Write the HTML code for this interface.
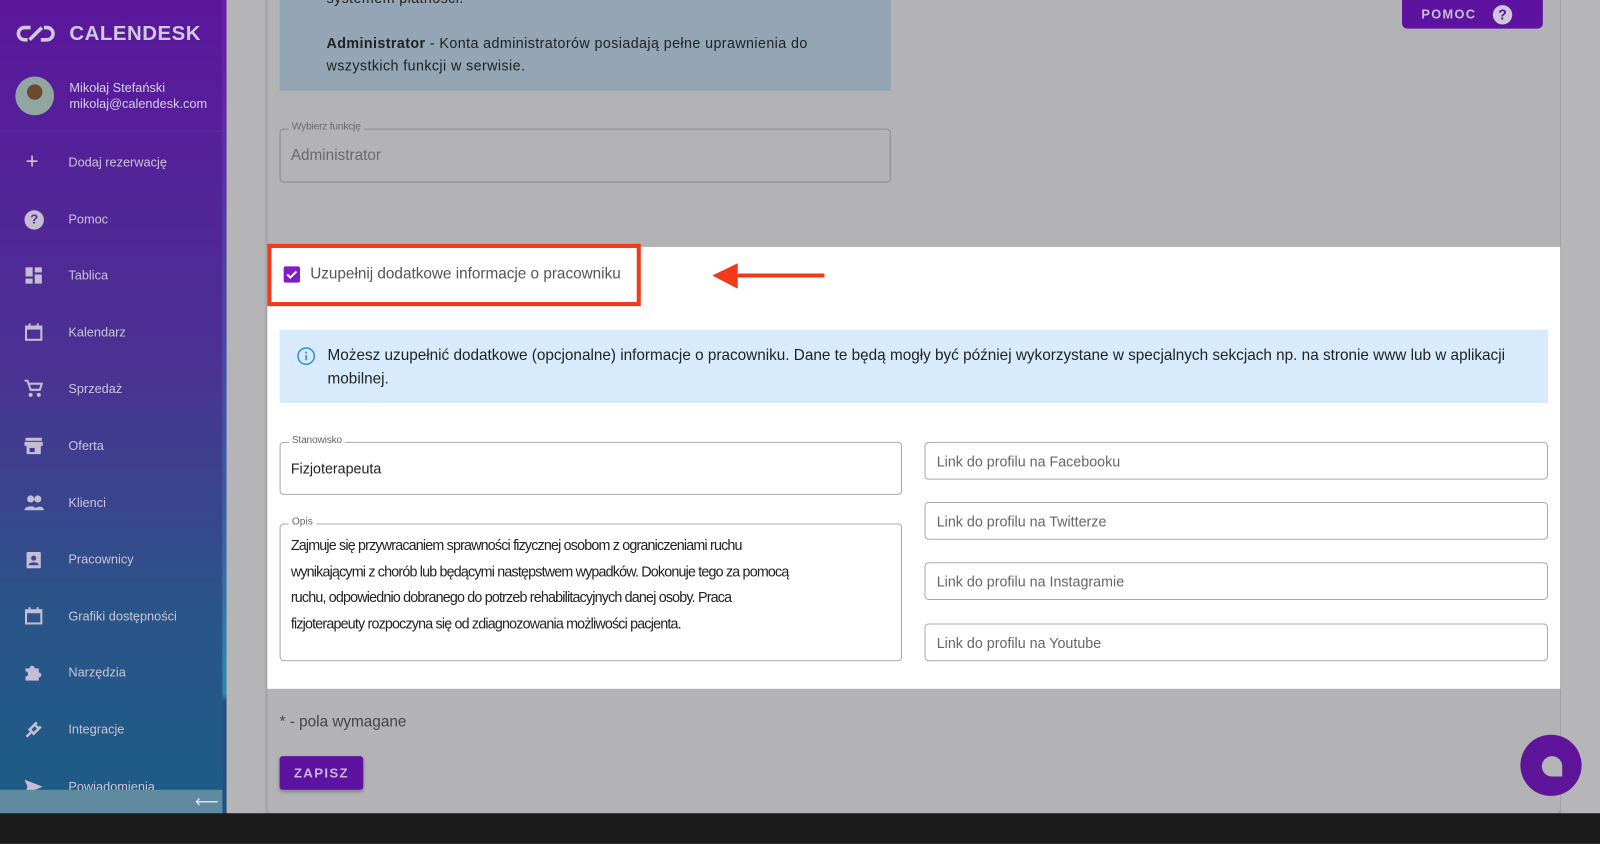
<!DOCTYPE html>
<html><head><meta charset="utf-8"><style>
*{box-sizing:border-box;margin:0;padding:0}
html,body{width:1600px;height:816px;overflow:hidden;background:#b5b4b7}
#w{position:absolute;left:0;top:0;width:1568px;height:800px;transform:scale(1.0204);transform-origin:0 0;font-family:"Liberation Sans",sans-serif;color:#1d1d1d}
.sb{position:absolute;left:0;top:0;width:218px;height:800px;background:linear-gradient(180deg,#5b169c 0%,#4b3293 45%,#2a5589 75%,#1c5c86 100%);color:#c9c3d6}
.sbedge{position:absolute;left:218px;top:0;width:4px;height:800px;background:linear-gradient(180deg,#6a1aa8,#3a5aa8 60%,#2a8aaa 85%,#1e5080 86%)}
.logo{position:absolute;left:16px;top:22px;font-weight:bold;font-size:20px;letter-spacing:.5px;color:#cfcbd6}
.logo span{margin-left:52px}
.av{position:absolute;left:15px;top:75px;width:38px;height:38px;border-radius:50%;background:radial-gradient(circle at 50% 40%,#6b4a30 0 25%,#8fa7a0 26%)}
.nm{position:absolute;left:68px;top:78px;font-size:12.5px;line-height:16px;color:#d6d0e0}
.sep{position:absolute;left:0;top:128px;width:218px;height:1px;background:rgba(255,255,255,.08)}
.it{position:absolute;left:0;width:218px;height:20px;font-size:12.5px;color:#cbc4d8}
.it i{position:absolute;left:24px;top:0;width:18px;height:18px;display:block}
.it b{position:absolute;left:67px;top:2px;font-weight:normal}
.foot{position:absolute;left:0;top:774px;width:222px;height:26px;background:#5f8aa0}
.foot span{position:absolute;right:8px;top:2px;color:#d8e2e8;font-size:16px}
.bot{position:absolute;left:0;top:797px;width:1600px;height:30px;background:#1a1a1a}
.card{position:absolute;left:262px;top:-10px;width:1267px;height:808px;background:#b3b2b5;border-radius:0 0 6px 6px;box-shadow:0 1px 3px rgba(0,0,0,.25)}
.rside{position:absolute;left:1530px;top:0;width:70px;height:800px;background:#b6b5b8}
.info1{position:absolute;left:274px;top:0;width:599px;height:89px;background:#94a5b5;font-size:14px;line-height:22px;color:#222;padding-left:46px;letter-spacing:.4px}
.fld{position:absolute;border:1px solid #8c8b8e;border-radius:4px}
.lbl{position:absolute;top:-8px;left:8px;font-size:10px;padding:0 3px;color:#6b6a6d;letter-spacing:-.2px}
.hl{position:absolute;left:262px;top:242px;width:1267px;height:433px;background:#fff}
.box{position:absolute;left:262px;top:239px;width:366px;height:61px;border:4px solid #f2391a}
.cb{position:absolute;left:278px;top:261px;width:16px;height:16px;background:#8419c9;border-radius:2px}
.t14{font-size:14px}
.info2{position:absolute;left:274px;top:323px;width:1243px;height:72px;background:#d7ebfc;color:#222;font-size:15px;line-height:23px;padding:14px 0 0 47px}
.wf{position:absolute;border:1px solid #a9a9a9;border-radius:4px;background:#fff}
.wf .lbl{background:#fff;color:#666}
.ph{position:absolute;left:11px;top:10px;color:#666}
.btn{position:absolute;left:274px;top:741px;width:82px;height:33px;background:#5e13a0;border-radius:3px;color:#c6b8d8;font-weight:bold;font-size:13px;letter-spacing:1.3px;text-align:center;line-height:33px;box-shadow:0 2px 3px rgba(0,0,0,.25)}
.pomoc{position:absolute;left:1374px;top:0;width:138px;height:28px;background:#5d139f;border-radius:0 0 5px 5px;color:#c9bfd8;font-weight:bold;font-size:12.5px;letter-spacing:1.3px;line-height:28px;padding-left:19px}
.pomoc i{position:absolute;left:89px;top:5px;width:19px;height:19px;border-radius:50%;background:#cfc8dc;color:#5d139f;font-style:normal;text-align:center;line-height:19px;font-size:14px;letter-spacing:0}
.fab{position:absolute;left:1490px;top:720px;width:60px;height:60px;border-radius:50%;background:#5e1599}
</style></head><body><div id="w">
<div class="card"></div>
<div class="rside"></div>
<div class="sb">
 <div class="logo"><svg style="position:absolute;left:0;top:2px" width="38" height="18" viewBox="0 0 38 18"><path d="M14 3H8a6 6 0 0 0 0 12h3M24 15h6a6 6 0 0 0 0-12h-3M13 15L25 3" fill="none" stroke="#cfcbd6" stroke-width="3.5"/></svg><span>CALENDESK</span></div>
 <div class="av"></div>
 <div class="nm">Mikołaj Stefański<br>mikolaj@calendesk.com</div>
 <div class="sep"></div>
 <div class="it" style="top:150px"><i style="font-style:normal;font-size:22px;top:-5px;left:25px">+</i><b>Dodaj rezerwację</b></div>
 <div class="it" style="top:206px"><i style="border-radius:50%;background:#c4bdd4;color:#52308f;font-style:normal;text-align:center;font-weight:bold;font-size:13px;line-height:18px;width:19px;height:19px">?</i><b>Pomoc</b></div>
 <div class="it" style="top:261px"><i><svg width="18" height="18"><rect x="1" y="1" width="7" height="9" fill="#c4bdd4"/><rect x="10" y="1" width="7" height="5" fill="#c4bdd4"/><rect x="1" y="12" width="7" height="5" fill="#c4bdd4"/><rect x="10" y="8" width="7" height="9" fill="#c4bdd4"/></svg></i><b>Tablica</b></div>
 <div class="it" style="top:317px"><i><svg width="18" height="18"><rect x="1.5" y="3" width="15" height="13" fill="none" stroke="#c4bdd4" stroke-width="2"/><rect x="1.5" y="3" width="15" height="3" fill="#c4bdd4"/><rect x="4" y="0" width="2" height="4" fill="#c4bdd4"/><rect x="12" y="0" width="2" height="4" fill="#c4bdd4"/></svg></i><b>Kalendarz</b></div>
 <div class="it" style="top:372px"><i><svg width="18" height="18"><path d="M0 1h3l3 9h9l2-6H5" fill="none" stroke="#c4bdd4" stroke-width="2"/><circle cx="6" cy="15" r="2" fill="#c4bdd4"/><circle cx="14" cy="15" r="2" fill="#c4bdd4"/></svg></i><b>Sprzedaż</b></div>
 <div class="it" style="top:428px"><i><svg width="18" height="18"><rect x="1" y="1" width="16" height="3" fill="#c4bdd4"/><path d="M0 5h18v4H0z M2 9h14v8H2z" fill="#c4bdd4"/><rect x="5" y="11" width="5" height="4" fill="#4a3693"/></svg></i><b>Oferta</b></div>
 <div class="it" style="top:484px"><i><svg width="20" height="18"><circle cx="6" cy="5" r="3.5" fill="#c4bdd4"/><circle cx="13" cy="5" r="3.5" fill="#c4bdd4"/><path d="M0 16c0-5 12-5 12 0zM10 16c0-4 9-5 9 0z" fill="#c4bdd4"/></svg></i><b>Klienci</b></div>
 <div class="it" style="top:539px"><i><svg width="18" height="18"><rect x="2" y="2" width="14" height="16" rx="1" fill="#c4bdd4"/><circle cx="9" cy="8" r="2.5" fill="#3f4690"/><path d="M4 15c0-4 10-4 10 0z" fill="#3f4690"/></svg></i><b>Pracownicy</b></div>
 <div class="it" style="top:595px"><i><svg width="18" height="18"><rect x="1.5" y="3" width="15" height="13" fill="none" stroke="#c4bdd4" stroke-width="2"/><rect x="1.5" y="3" width="15" height="3" fill="#c4bdd4"/><rect x="4" y="0" width="2" height="4" fill="#c4bdd4"/><rect x="12" y="0" width="2" height="4" fill="#c4bdd4"/></svg></i><b>Grafiki dostępności</b></div>
 <div class="it" style="top:650px"><i><svg width="18" height="18"><path d="M1 5h4a2.5 2.5 0 0 1 5 0h4v4a2.5 2.5 0 0 1 0 5v3H1v-4a2.5 2.5 0 0 0 0-5z" fill="#c4bdd4"/></svg></i><b>Narzędzia</b></div>
 <div class="it" style="top:706px"><i><svg width="18" height="18"><path d="M2 16l4-4M10 4l4 4-5 5-4-4zM12 2l-2 2M16 6l-2 2" stroke="#c4bdd4" stroke-width="2.5" fill="none"/></svg></i><b>Integracje</b></div>
 <div class="it" style="top:762px"><i><svg width="18" height="18"><path d="M0 2l18 7-18 7 3-7z" fill="#c4bdd4"/></svg></i><b>Powiadomienia</b></div>
 <div class="foot"><span>⟵</span></div>
</div>
<div class="sbedge"></div>

<div class="info1"><div style="margin-top:-13px">systemem płatności.</div><div style="margin-top:22px"><b>Administrator</b> - Konta administratorów posiadają pełne uprawnienia do<br>wszystkich funkcji w serwisie.</div></div>
<div class="fld" style="left:274px;top:126px;width:599px;height:53px"><span class="lbl" style="background:#b3b2b5">Wybierz funkcję</span><span style="position:absolute;left:10px;top:17px;color:#6a696c;font-size:15px">Administrator</span></div>
<div class="pomoc">POMOC<i>?</i></div>

<div class="hl"></div>
<div class="box"></div>
<div class="cb"><svg width="16" height="16"><path d="M3.5 8l3 3 6-6" stroke="#fff" stroke-width="2" fill="none"/></svg></div>
<div style="position:absolute;left:304px;top:260px;color:#555;font-size:15px">Uzupełnij dodatkowe informacje o pracowniku</div>
<svg style="position:absolute;left:698px;top:255px" width="112" height="32"><path d="M110 15H25" stroke="#f2391a" stroke-width="4"/><path d="M0 15L25 3v25z" fill="#f2391a"/></svg>

<div class="info2"><svg style="position:absolute;left:17px;top:17px" width="18" height="18"><circle cx="9" cy="9" r="8" fill="none" stroke="#2f8fe0" stroke-width="1.5"/><rect x="8.2" y="8" width="1.6" height="5" fill="#2f8fe0"/><circle cx="9" cy="5.5" r="1" fill="#2f8fe0"/></svg>Możesz uzupełnić dodatkowe (opcjonalne) informacje o pracowniku. Dane te będą mogły być później wykorzystane w specjalnych sekcjach np. na stronie www lub w aplikacji<br>mobilnej.</div>

<div class="wf t14" style="left:274px;top:433px;width:610px;height:52px"><span class="lbl">Stanowisko</span><span style="position:absolute;left:10px;top:17px;color:#222">Fizjoterapeuta</span></div>
<div class="wf t14" style="left:274px;top:513px;width:610px;height:135px;letter-spacing:-.8px"><span class="lbl" style="letter-spacing:0">Opis</span><div style="position:absolute;left:10px;top:8px;line-height:25.5px;color:#222">Zajmuje się przywracaniem sprawności fizycznej osobom z ograniczeniami ruchu<br>wynikającymi z chorób lub będącymi następstwem wypadków. Dokonuje tego za pomocą<br>ruchu, odpowiednio dobranego do potrzeb rehabilitacyjnych danej osoby. Praca<br>fizjoterapeuty rozpoczyna się od zdiagnozowania możliwości pacjenta.</div></div>
<div class="wf t14" style="left:906px;top:433px;width:611px;height:37px"><span class="ph">Link do profilu na Facebooku</span></div>
<div class="wf t14" style="left:906px;top:492px;width:611px;height:37px"><span class="ph">Link do profilu na Twitterze</span></div>
<div class="wf t14" style="left:906px;top:551px;width:611px;height:37px"><span class="ph">Link do profilu na Instagramie</span></div>
<div class="wf t14" style="left:906px;top:611px;width:611px;height:37px"><span class="ph">Link do profilu na Youtube</span></div>

<div style="position:absolute;left:274px;top:699px;color:#444;font-size:15px">* - pola wymagane</div>
<div class="btn">ZAPISZ</div>
<div class="fab"><svg style="position:absolute;left:19px;top:19px" width="24" height="24"><path d="M12 2a10 10 0 1 0 0 20h10V12A10 10 0 0 0 12 2z" fill="#b5b4b7"/></svg></div>
<div class="bot"></div>
</div></body></html>
